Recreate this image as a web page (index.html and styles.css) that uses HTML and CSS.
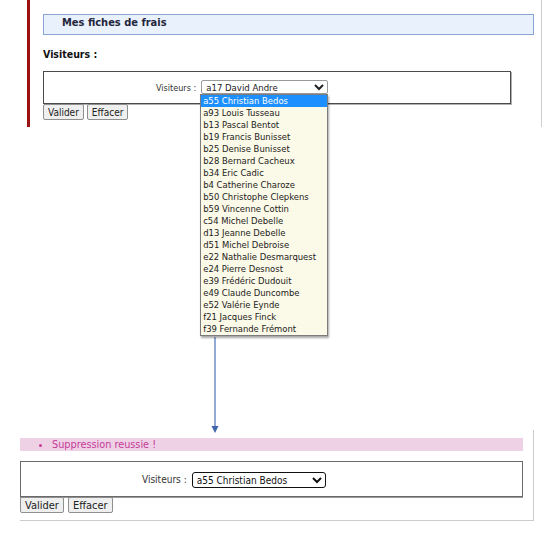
FILE: index.html
```html
<!DOCTYPE html>
<html lang="fr">
<head>
<meta charset="utf-8">
<title>Mes fiches de frais</title>
<link rel="stylesheet" href="styles.css">
</head>
<body>
<div class="page">
  <section class="top">
    <div class="titlebar">Mes fiches de frais</div>
    <h2 class="subtitle">Visiteurs :</h2>
    <form class="form">
      <div class="fieldbox">
        <label class="lbl" for="v1">Visiteurs :</label>
        <span class="selwrap">
          <select class="sel" id="v1"><option>a17 David Andre</option></select>
          <ul class="droplist">
            <li class="on">a55 Christian Bedos</li>
            <li>a93 Louis Tusseau</li>
            <li>b13 Pascal Bentot</li>
            <li>b19 Francis Bunisset</li>
            <li>b25 Denise Bunisset</li>
            <li>b28 Bernard Cacheux</li>
            <li>b34 Eric Cadic</li>
            <li>b4 Catherine Charoze</li>
            <li>b50 Christophe Clepkens</li>
            <li>b59 Vincenne Cottin</li>
            <li>c54 Michel Debelle</li>
            <li>d13 Jeanne Debelle</li>
            <li>d51 Michel Debroise</li>
            <li>e22 Nathalie Desmarquest</li>
            <li>e24 Pierre Desnost</li>
            <li>e39 Frédéric Dudouit</li>
            <li>e49 Claude Duncombe</li>
            <li>e52 Valérie Eynde</li>
            <li>f21 Jacques Finck</li>
            <li>f39 Fernande Frémont</li>
          </ul>
        </span>
      </div>
      <div class="buttons">
        <button type="button" class="btn">Valider</button>
        <button type="button" class="btn">Effacer</button>
      </div>
    </form>
  </section>

  <svg class="arrow" width="12" height="96" viewBox="0 0 12 96">
    <line x1="6" y1="0" x2="6" y2="90" stroke="#4a72b8" stroke-width="1.2"/>
    <polygon points="2.5,89 9.5,89 6,96" fill="#3f66ad"/>
  </svg>

  <section class="bottom">
    <ul class="notice"><li>Suppression reussie !</li></ul>
    <form class="form2">
      <div class="fieldbox2">
        <label class="lbl2" for="v2">Visiteurs :</label>
        <select class="sel2" id="v2"><option>a55 Christian Bedos</option></select>
      </div>
      <div class="buttons2">
        <button type="button" class="btn2">Valider</button>
        <button type="button" class="btn2">Effacer</button>
      </div>
    </form>
  </section>
</div>
</body>
</html>
```

FILE: styles.css
```css
* { box-sizing: border-box; }

html, body {
  margin: 0;
  padding: 0;
  background: #ffffff;
}

body {
  font-family: "DejaVu Sans Condensed", "DejaVu Sans", sans-serif;
  font-stretch: condensed;
  color: #222;
}

.page {
  position: relative;
  width: 544px;
  height: 539px;
}

/* ---------- top screenshot ---------- */
.top {
  margin-left: 27px;
  width: 515px;
  height: 127px;
  border-left: 3px solid #9c1212;
  border-right: 1px solid #cfcfcf;
  padding: 14px 0 0 13px;
}

.titlebar {
  width: 491px;
  height: 21px;
  border: 1px solid #8aa5d3;
  background: #e9f1fd;
  padding-left: 18px;
  font-size: 11px;
  font-weight: bold;
  line-height: 16px;
  color: #23263a;
}

.subtitle {
  margin: 12px 0 0 0;
  font-size: 10.5px;
  line-height: 14px;
  font-weight: bold;
  color: #111;
}

.form {
  margin: 10px 0 0 0;
}

.fieldbox {
  width: 468px;
  height: 33px;
  border: 1px solid #4a4a4a;
  box-shadow: 1px 1px 0 #b0b0b0;
  display: flex;
  align-items: flex-start;
  padding: 8px 0 0 112px;
}

.lbl {
  font-size: 9px;
  line-height: 14px;
  margin-top: 1px;
  color: #333;
}

.selwrap {
  position: relative;
  margin-left: 5px;
  display: block;
}

.sel {
  display: block;
  width: 127px;
  height: 14px;
  font-family: inherit;
  font-stretch: condensed;
  font-size: 9.5px;
  padding: 0;
  border: 1px solid #9a9a9a;
  border-radius: 2px;
  background: #fff;
  color: #222;
}

.droplist {
  position: absolute;
  left: -1px;
  top: 100%;
  width: 128px;
  margin: 0;
  padding: 0;
  list-style: none;
  background: #fbf9e7;
  border: 1px solid #7c7c7c;
  box-shadow: 1px 2px 2px rgba(0, 0, 0, 0.35);
  z-index: 2;
}

.droplist li {
  font-size: 9.4px;
  line-height: 12px;
  height: 12px;
  padding-left: 2px;
  color: #222;
  white-space: nowrap;
}

.droplist li.on {
  background: #1e8fff;
  color: #fff;
}

.buttons {
  display: flex;
  gap: 3px;
  margin-top: 0;
}

.btn {
  height: 16px;
  padding: 0 4px;
  font-family: inherit;
  font-stretch: condensed;
  font-size: 10px;
  line-height: 13px;
  color: #222;
  background: #efefef;
  border: 1px solid #8f8f8f;
  border-radius: 2px;
}

/* ---------- arrow annotation ---------- */
.arrow {
  position: absolute;
  left: 209px;
  top: 337px;
}

/* ---------- bottom screenshot ---------- */
.bottom {
  margin: 303px 0 0 20px;
  width: 514px;
  border-right: 1px solid #cccccc;
  border-bottom: 1px solid #cccccc;
  padding: 8px 0 7px 0;
}

.notice {
  width: 503px;
  height: 13px;
  margin: 0;
  padding: 0 0 0 32px;
  background: #efd1e6;
  color: #c43c98;
  font-size: 10.8px;
  line-height: 13px;
  list-style: disc outside;
}

.form2 {
  margin: 10px 0 0 0;
}

.fieldbox2 {
  width: 503px;
  height: 36px;
  border: 1px solid #6a6a6a;
  box-shadow: 0 1px 0 #9a9a9a;
  display: flex;
  align-items: flex-start;
  padding: 10px 0 0 121px;
}

.lbl2 {
  font-size: 10px;
  line-height: 16px;
  color: #333;
}

.sel2 {
  display: block;
  margin-left: 5px;
  width: 134px;
  height: 16px;
  font-family: inherit;
  font-stretch: condensed;
  font-size: 10px;
  padding: 0;
  border: 1.5px solid #111;
  border-radius: 3px;
  background: #fff;
  color: #111;
}

.buttons2 {
  display: flex;
  gap: 4px;
}

.btn2 {
  height: 16px;
  padding: 0 4px;
  font-family: inherit;
  font-stretch: condensed;
  font-size: 11px;
  line-height: 13px;
  color: #222;
  background: #efefef;
  border: 1px solid #8f8f8f;
  border-radius: 2px;
}
```
